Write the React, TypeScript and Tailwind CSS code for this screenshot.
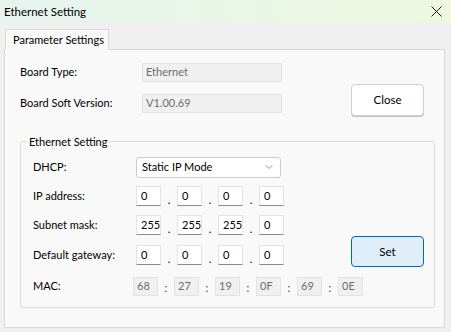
import { ChevronDown } from "lucide-react";

const ipRows = [
  { label: "IP address:", values: ["0", "0", "0", "0"], mt: "mt-[9px]" },
  { label: "Subnet mask:", values: ["255", "255", "255", "0"], mt: "mt-[9px]" },
  { label: "Default gateway:", values: ["0", "0", "0", "0"], mt: "mt-[10px]" }
];

const mac = ["68", "27", "19", "0F", "69", "0E"];

function CampoIp({ valor }: { valor: string }) {
  return (
    <div className="flex h-[20px] w-[25px] shrink-0 items-center border border-[#e3e3e3] border-b-[#8a8a8a] bg-white pl-[4px] text-black">
      {valor}
    </div>
  );
}

function CampoDesativado({ valor, largura }: { valor: string; largura: string }) {
  return (
    <div className={`flex h-[19px] ${largura} shrink-0 items-center border border-[#e2e2e2] bg-[#f0f0f0] pl-[3px] text-[#6d6d6d]`}>
      {valor}
    </div>
  );
}

export default function App() {
  return (
    <div className="flex h-[332px] w-[451px] flex-col overflow-hidden whitespace-nowrap bg-[#f0f0f0] font-['Lato',sans-serif] text-[11px] text-black">
      <div className="flex h-[23px] shrink-0 items-center justify-between bg-gradient-to-r from-[#e5f4ef] to-[#eef8de] pl-[4px] pr-[8px] text-[11.5px]">
        <span>Ethernet Setting</span>
        <svg width="11" height="11" viewBox="0 0 11 11" className="mr-[1px]">
          <path d="M0.5 0.5 L10.5 10.5 M10.5 0.5 L0.5 10.5" stroke="#1a1a1a" strokeWidth="1" />
        </svg>
      </div>

      <div className="flex flex-col pl-[4px] pt-[6px]">
        <div className="flex">
          <div className="z-10 -mb-px ml-px flex h-[21px] w-[104px] items-center border border-b-0 border-[#d9d9d9] bg-[#f9f9f9] pl-[7px]">
            Parameter Settings
          </div>
        </div>

        <div className="flex h-[279px] w-[441px] flex-col border border-[#d9d9d9] bg-[#f9f9f9]">
          <div className="flex pl-[15px] pt-[13px]">
            <div className="flex flex-col gap-[12px]">
              <div className="flex items-center">
                <span className="w-[122px]">Board Type:</span>
                <CampoDesativado valor="Ethernet" largura="w-[140px]" />
              </div>
              <div className="flex items-center">
                <span className="w-[122px]">Board Soft Version:</span>
                <CampoDesativado valor="V1.00.69" largura="w-[140px]" />
              </div>
            </div>
            <button className="ml-[69px] mt-[21px] h-[32px] w-[73px] rounded-[4px] border border-[#d0d0d0] bg-white text-[11.5px] shadow-[0_1px_0_#c4c4c4]">
              Close
            </button>
          </div>

          <fieldset className="ml-[15px] mt-[18px] w-[415px] rounded-[2px] border border-[#dcdcdc] p-0">
            <legend className="ml-[6px] px-[2px] leading-[15px]">Ethernet Setting</legend>
            <div className="flex pl-[12px] pb-[11px] pt-[8px]">
              <div className="flex w-[251px] shrink-0 flex-col">
                <div className="flex h-[20px] items-center">
                  <span className="w-[103px] shrink-0">DHCP:</span>
                  <div className="flex h-[21px] w-[145px] shrink-0 items-center justify-between rounded-[3px] border border-[#cccccc] bg-white pl-[5px] pr-[5px]">
                    <span>Static IP Mode</span>
                    <ChevronDown size={12} strokeWidth={1.3} color="#555" />
                  </div>
                </div>

                {ipRows.map((linha) => (
                  <div key={linha.label} className={`flex h-[20px] items-center ${linha.mt}`}>
                    <span className="w-[103px] shrink-0">{linha.label}</span>
                    {linha.values.map((valor, i) => (
                      <div key={i} className="flex shrink-0 items-center">
                        {i > 0 ? <span className="w-[16px] pt-[6px] text-center leading-none">.</span> : null}
                        <CampoIp valor={valor} />
                      </div>
                    ))}
                  </div>
                ))}

                <div className="mt-[12px] flex h-[19px] w-max items-center">
                  <span className="w-[100px] shrink-0">MAC:</span>
                  {mac.map((valor, i) => (
                    <div key={i} className="flex shrink-0 items-center">
                      {i > 0 ? <span className="w-[16px] pt-[3px] text-center text-[#4b1f6f]">:</span> : null}
                      <CampoDesativado valor={valor} largura="w-[25px]" />
                    </div>
                  ))}
                </div>
              </div>

              <button className="ml-[67px] mt-[79px] h-[31px] w-[73px] shrink-0 self-start rounded-[4px] border border-[#0067c0] bg-[#e0eef9] text-[11.5px]">
                Set
              </button>
            </div>
          </fieldset>
        </div>
      </div>
    </div>
  );
}
